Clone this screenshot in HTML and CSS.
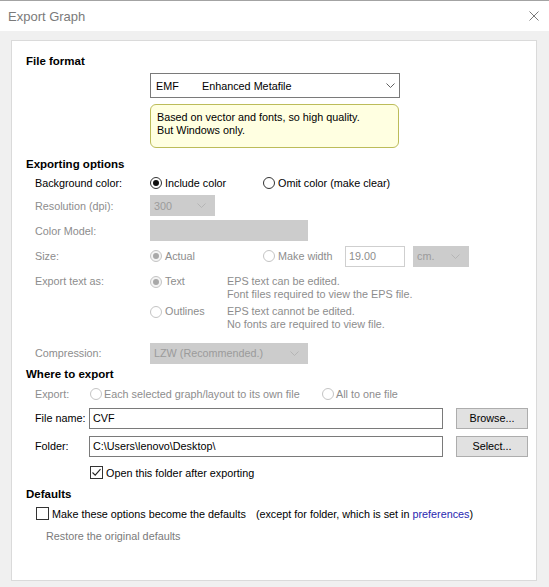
FILE: index.html
```html
<!DOCTYPE html>
<html>
<head>
<meta charset="utf-8">
<link rel="stylesheet" href="styles.css">
</head>
<body>
<div class="titlebar">
  <span class="title">Export Graph</span>
  <svg class="close" viewBox="0 0 10 10"><path d="M0.5 0.5 L9.5 9.5 M9.5 0.5 L0.5 9.5" stroke="#7a7a7a" stroke-width="1" fill="none"/></svg>
</div>
<div class="client">
  <div class="panel">
    <div class="h">File format</div>
    <div class="combo">
      <span class="c-code">EMF</span><span class="c-name">Enhanced Metafile</span>
      <svg class="chev" viewBox="0 0 9 5"><path d="M0.5 0.5 L4.5 4.5 L8.5 0.5" stroke="#606060" fill="none" stroke-width="1"/></svg>
    </div>
    <div class="note">Based on vector and fonts, so high quality.<br>But Windows only.</div>

    <div class="h h-export">Exporting options</div>
    <div class="row r-bg">
      <span class="lbl">Background color:</span>
      <span class="opt o1"><span class="radio on"></span>Include color</span>
      <span class="opt"><span class="radio"></span>Omit color (make clear)</span>
    </div>
    <div class="row r25 dis">
      <span class="lbl">Resolution (dpi):</span>
      <span class="sel w-res"><span>300</span><svg class="chev" viewBox="0 0 9 5"><path d="M0.5 0.5 L4.5 4.5 L8.5 0.5" stroke="#b5b5b5" fill="none" stroke-width="1"/></svg></span>
    </div>
    <div class="row r25 dis">
      <span class="lbl">Color Model:</span>
      <span class="sel w-model"></span>
    </div>
    <div class="row r26 dis">
      <span class="lbl">Size:</span>
      <span class="opt o1"><span class="radio dr on"></span>Actual</span>
      <span class="opt o2"><span class="radio dr"></span>Make width</span>
      <span class="input w-width">19.00</span>
      <span class="sel w-unit"><span>cm.</span><svg class="chev" viewBox="0 0 9 5"><path d="M0.5 0.5 L4.5 4.5 L8.5 0.5" stroke="#b5b5b5" fill="none" stroke-width="1"/></svg></span>
    </div>
    <div class="row r-text dis">
      <span class="lbl lbl-top">Export text as:</span>
      <div class="tcol">
        <div class="tline">
          <span class="topt"><span class="radio dr on"></span>Text</span>
          <div class="desc">EPS text can be edited.<br>Font files required to view the EPS file.</div>
        </div>
        <div class="tline t2">
          <span class="topt"><span class="radio dr"></span>Outlines</span>
          <div class="desc">EPS text cannot be edited.<br>No fonts are required to view file.</div>
        </div>
      </div>
    </div>
    <div class="row r-comp dis">
      <span class="lbl">Compression:</span>
      <span class="sel w-model"><span>LZW (Recommended.)</span><svg class="chev" viewBox="0 0 9 5"><path d="M0.5 0.5 L4.5 4.5 L8.5 0.5" stroke="#b5b5b5" fill="none" stroke-width="1"/></svg></span>
    </div>

    <div class="h h-where">Where to export</div>
    <div class="row r24 dis">
      <span class="lbl2">Export:</span>
      <span class="opt o-each"><span class="radio dr"></span>Each selected graph/layout to its own file</span>
      <span class="opt"><span class="radio dr"></span>All to one file</span>
    </div>
    <div class="row r24">
      <span class="lbl2">File name:</span>
      <span class="input w-path">CVF</span>
      <span class="btn">Browse...</span>
    </div>
    <div class="row r24 r-folder">
      <span class="lbl2">Folder:</span>
      <span class="input w-path">C:\Users\lenovo\Desktop\</span>
      <span class="btn">Select...</span>
    </div>
    <div class="row r-open">
      <span class="lbl2"></span>
      <span class="opt"><svg class="check" viewBox="0 0 13 13"><rect x="0.5" y="0.5" width="12" height="12" fill="#fff" stroke="#333"/><path d="M2.5 6.5 L5.2 9.2 L10.5 3.2" stroke="#222" stroke-width="1.1" fill="none"/></svg>Open this folder after exporting</span>
    </div>

    <div class="h h-def">Defaults</div>
    <div class="row r-make">
      <span class="opt"><svg class="check" viewBox="0 0 13 13"><rect x="0.5" y="0.5" width="12" height="12" fill="#fff" stroke="#333"/></svg>Make these options become the defaults</span>
      <span class="except">(except for folder, which is set in <span class="link">preferences</span>)</span>
    </div>
    <div class="restore">Restore the original defaults</div>
  </div>
</div>
</body>
</html>
```

FILE: styles.css
```css
* { box-sizing: border-box; }
html, body { margin: 0; padding: 0; }
body {
  width: 549px;
  height: 587px;
  overflow: hidden;
  background: #f0f0f0;
  font-family: "Liberation Sans", Arial, sans-serif;
  font-size: 10.8px;
  color: #000;
}
.titlebar {
  height: 31px;
  background: #fff;
  border-top: 1px solid #a3a3a3;
  display: flex;
  align-items: center;
  justify-content: space-between;
  padding: 0 10px 0 8px;
}
.title { font-size: 13px; color: #7a7a7a; }
.close { width: 10px; height: 10px; display: block; }
.client { padding: 9px 12px 0 11px; }
.panel {
  background: #fff;
  border: 1px solid #dadada;
  height: 541px;
  padding: 12px 0 0 14px;
}
.h {
  font-weight: bold;
  font-size: 11.5px;
  height: 16px;
  line-height: 16px;
}
.combo {
  margin: 4px 0 0 124px;
  width: 250px;
  height: 25px;
  border: 1px solid #7a7a7a;
  display: flex;
  align-items: center;
  padding: 0 4px 0 5px;
}
.c-code { width: 46px; }
.c-name { flex: 1; }
.chev { width: 9px; height: 5px; display: block; }
.note {
  margin: 6px 0 0 124px;
  width: 249px;
  height: 44px;
  border: 1px solid #bcbc5a;
  border-radius: 6px;
  background: #ffffe1;
  padding: 6px 0 0 6px;
  line-height: 13px;
}
.h-export { margin-top: 8px; }
.row {
  display: flex;
  align-items: center;
  padding-left: 9px;
}
.lbl { width: 115px; flex: none; }
.lbl2 { width: 54px; flex: none; }
.dis { color: #8d8d8d; }
.r-bg { height: 21px; }
.r25 { height: 25px; }
.r26 { height: 26px; }
.r24 { height: 24px; }
.opt { display: flex; align-items: center; flex: none; }
.o1 { width: 113px; }
.o2 { width: 82px; }
.radio {
  width: 12px;
  height: 12px;
  border: 1px solid #333;
  border-radius: 50%;
  background: #fff;
  margin-right: 3px;
  position: relative;
  flex: none;
}
.radio.on::after {
  content: "";
  position: absolute;
  left: 2px; top: 2px;
  width: 6px; height: 6px;
  border-radius: 50%;
  background: #111;
}
.radio.dr { border-color: #c4c4c4; }
.radio.dr.on { background: #f4f4f4; }
.radio.dr.on::after { background: #a8a8a8; }
.sel {
  height: 21px;
  background: #cccccc;
  color: #9b9b9b;
  display: flex;
  align-items: center;
  justify-content: space-between;
  padding: 0 9px 0 4px;
}
.w-res { width: 65px; }
.w-model { width: 158px; }
.w-unit { width: 56px; margin-left: 8px; }
.input {
  height: 21px;
  border: 1px solid #7a7a7a;
  background: #fff;
  display: flex;
  align-items: center;
  padding-left: 3px;
  color: #000;
}
.dis .input { border-color: #cfcfcf; color: #8d8d8d; }
.w-width { width: 60px; }
.r-text { align-items: flex-start; margin-top: 6px; }
.lbl-top { line-height: 13px; }
.tline { display: flex; align-items: flex-start; line-height: 13px; }
.t2 { margin-top: 4px; }
.topt { width: 77px; display: flex; align-items: center; height: 13px; }
.r-comp { margin-top: 11px; height: 22px; }
.h-where { margin-top: 2px; }
.o-each { width: 232px; margin-left: 1px; }
.o-each .radio, .r24 .radio { margin-right: 2px; }
.w-path { width: 354px; }
.btn {
  margin-left: 13px;
  width: 72px;
  height: 21px;
  background: #e1e1e1;
  border: 1px solid #adadad;
  display: flex;
  align-items: center;
  justify-content: center;
}
.r-folder { margin-top: 4px; }
.r-open { height: 25px; margin-top: 2px; }
.check { width: 13px; height: 13px; display: block; margin-right: 3px; flex: none; }
.r-open .check { margin-left: 1px; }
.h-def { margin-top: 1px; }
.r-make { height: 23px; padding-left: 10px; }
.except { margin-left: 10px; }
.link { color: #2828b0; }
.restore {
  margin-top: 1px;
  height: 20px;
  line-height: 20px;
  padding-left: 20px;
  color: #7a7a7a;
}
```
